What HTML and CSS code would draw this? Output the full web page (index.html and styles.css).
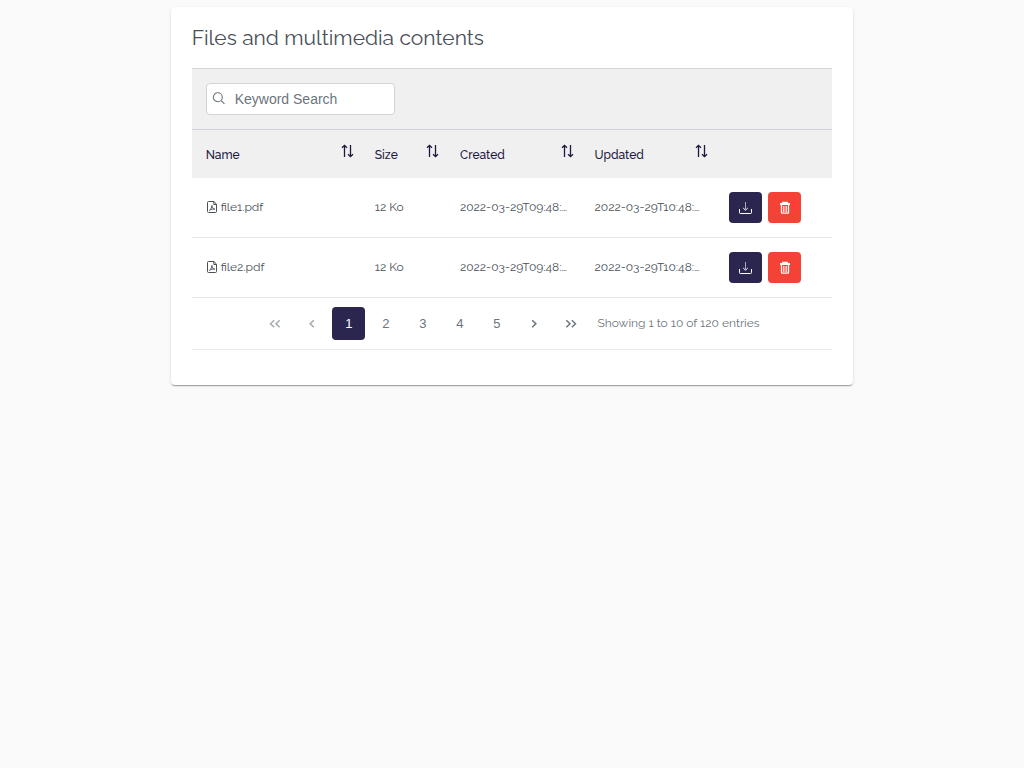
FILE: index.html
```html
<!DOCTYPE html>
<html lang="en">
<head>
<meta charset="utf-8">
<meta name="viewport" content="width=device-width, initial-scale=1">
<title>Files and multimedia contents</title>
<link rel="stylesheet" href="styles.css">
</head>
<body>
<svg class="sprite" aria-hidden="true">
  <symbol id="sort" viewBox="0 0 14 14"><path d="M4.500 13V1.500M2 3.800l2.500-2.400L7 3.800M10.500 1v11.500M8 10.200l2.500 2.400 2.500-2.400" fill="none" stroke="currentColor" stroke-width="1.300"/></symbol>
  <symbol id="pdf" viewBox="0 0 12 14"><path d="M2.500 1.500H8l2.500 2.800v7.200a1 1 0 0 1-1 1h-7a1 1 0 0 1-1-1v-9a1 1 0 0 1 1-1zM7.800 1.500v3h2.700" fill="none" stroke="currentColor"/><path d="M3.300 10.500C4.800 9.500 5.900 7.500 5.900 5.300M5.900 5.500c0 2 1.200 3.800 3 3.600M3.500 10.300c1.500-1.100 3.400-1.500 5.400-1.200" fill="none" stroke="currentColor" stroke-width=".9"/></symbol>
  <symbol id="download" viewBox="0 0 14 14"><path d="M6.500 1v7.500" fill="none" stroke="currentColor" stroke-opacity=".6"/><path d="M4.200 7l2.300 2.200L8.800 7" fill="none" stroke="currentColor"/><path d="M.5 8v3.700a.8.800 0 0 0 .8.800h10.400a.8.800 0 0 0 .8-.8V8" fill="none" stroke="currentColor"/></symbol>
  <symbol id="trash" viewBox="0 0 12 14"><path d="M1 3h10M4 2.500V1.700h4v.8" fill="none" stroke="currentColor" stroke-width="1.800"/><path d="M2.500 4v7.500a.6.600 0 0 0 .6.600h5.800a.6.600 0 0 0 .6-.6V4" fill="none" stroke="currentColor" stroke-width="1.300"/><path d="M4.500 5v6M6 5v6M7.500 5v6" fill="none" stroke="currentColor" stroke-width=".8"/></symbol>
  <symbol id="chevron" viewBox="0 0 14 14"><path d="M8.800 3.200L5.200 6.700l3.600 3.500" fill="none" stroke="currentColor" stroke-width="1.600"/></symbol>
  <symbol id="double" viewBox="0 0 14 14"><path d="M6.200 3.200L2.500 6.700l3.700 3.500M11.700 3.200L8 6.700l3.700 3.500" fill="none" stroke="currentColor" stroke-width="1.500"/></symbol>
</svg>
<main class="card">
  <h1 class="title">Files and multimedia contents</h1>
  <div class="toolbar">
    <label class="search">
      <svg class="search-icon" viewBox="0 0 14 14" aria-hidden="true"><path d="M10.300 5.300a4.500 4.500 0 1 1-9 0 4.500 4.500 0 0 1 9 0zM9 8.500l3.500 3.300" fill="none" stroke="currentColor" stroke-width="1.100"/></svg>
      <input class="search-input" type="text" placeholder="Keyword Search" aria-label="Keyword Search">
    </label>
  </div>
  <table class="files">
    <colgroup><col class="col-name"><col class="col-size"><col class="col-date"><col class="col-date"><col class="col-actions"></colgroup>
    <thead>
      <tr>
        <th><div class="head">Name <svg class="sort"><use href="#sort"/></svg></div></th>
        <th><div class="head">Size <svg class="sort"><use href="#sort"/></svg></div></th>
        <th><div class="head">Created <svg class="sort"><use href="#sort"/></svg></div></th>
        <th><div class="head">Updated <svg class="sort"><use href="#sort"/></svg></div></th>
        <th></th>
      </tr>
    </thead>
    <tbody>
      <tr>
        <td class="text"><div class="file"><svg class="pdf"><use href="#pdf"/></svg>file1.pdf</div></td>
        <td class="text">12 Ko</td>
        <td class="text">2022-03-29T09:48:…</td>
        <td class="text">2022-03-29T10:48:…</td>
        <td><div class="actions">
          <button class="action" type="button" aria-label="Download file1.pdf"><svg class="icon"><use href="#download"/></svg></button>
          <button class="action danger" type="button" aria-label="Delete file1.pdf"><svg class="icon"><use href="#trash"/></svg></button>
        </div></td>
      </tr>
      <tr>
        <td class="text"><div class="file"><svg class="pdf"><use href="#pdf"/></svg>file2.pdf</div></td>
        <td class="text">12 Ko</td>
        <td class="text">2022-03-29T09:48:…</td>
        <td class="text">2022-03-29T10:48:…</td>
        <td><div class="actions">
          <button class="action" type="button" aria-label="Download file2.pdf"><svg class="icon"><use href="#download"/></svg></button>
          <button class="action danger" type="button" aria-label="Delete file2.pdf"><svg class="icon"><use href="#trash"/></svg></button>
        </div></td>
      </tr>
    </tbody>
  </table>
  <nav class="paginator" aria-label="Pagination">
    <button class="page" type="button" disabled aria-label="First page"><svg class="icon"><use href="#double"/></svg></button>
    <button class="page" type="button" disabled aria-label="Previous page"><svg class="icon"><use href="#chevron"/></svg></button>
    <button class="page current" type="button" aria-current="page">1</button>
    <button class="page" type="button">2</button>
    <button class="page" type="button">3</button>
    <button class="page" type="button">4</button>
    <button class="page" type="button">5</button>
    <button class="page" type="button" aria-label="Next page"><svg class="icon flip"><use href="#chevron"/></svg></button>
    <button class="page" type="button" aria-label="Last page"><svg class="icon flip"><use href="#double"/></svg></button>
    <span class="summary">Showing 1 to 10 of 120 entries</span>
  </nav>
</main>
</body>
</html>
```
FILE: styles.css
```css
* { box-sizing: border-box; }
body {
  margin: 0;
  padding: 7px 0;
  background: #fafafa;
  color: #495057;
  font-family: Raleway, Lato, sans-serif;
  font-size: 12px;
  line-height: 18px;
}
.sprite { display: none; }
.card {
  width: 66.6667%;
  margin: 0 auto;
  padding: 18px 21px 35px;
  background: #fff;
  border-radius: 4px;
  box-shadow: 0 2px 1px -1px rgba(0,0,0,.2), 0 1px 1px 0 rgba(0,0,0,.14), 0 1px 3px 0 rgba(0,0,0,.12);
}
.title { margin: 0 0 17px; font-size: 21px; font-weight: 400; line-height: 26px; }
.toolbar {
  padding: 14px;
  background: #f0f0f0;
  border-top: 1px solid #ced4da;
  border-bottom: 1px solid #ced4da;
}
.search { display: flex; width: 189px; position: relative; }
.search-icon { position: absolute; left: 6px; top: 9px; width: 14px; height: 14px; color: #6c757d; }
.search-input {
  width: 100%;
  height: 32px;
  padding: 0 7px 0 28px;
  border: 1px solid #ced4da;
  border-radius: 4px;
  background: #fff;
  color: #495057;
  font-family: "Liberation Sans", Arial, sans-serif;
  font-size: 14px;
}
.search-input::placeholder { color: #6c757d; }
.files { width: 100%; table-layout: fixed; border-collapse: separate; border-spacing: 0; }
.col-name { width: 26.4%; }
.col-size { width: 13.3%; }
.col-date { width: 21%; }
.files th { height: 48px; padding: 0 7px 0 14px; background: #f0f0f0; color: #1c1840; font-weight: 500; text-align: left; }
.head { display: flex; justify-content: space-between; align-items: flex-end; }
.sort { width: 14px; height: 14px; margin-bottom: 6px; }
.files td {
  height: 60px;
  padding: 0 0 0 14px;
  border-bottom: 1px solid #e4e7ea;
  white-space: nowrap;
}
.files .text { padding-bottom: 2px; overflow: hidden; text-overflow: ellipsis; }
.file { display: flex; align-items: center; gap: 3px; }
.pdf { width: 12px; height: 14px; }
.actions { display: flex; gap: 6px; }
.action {
  display: grid;
  place-items: center;
  width: 33px;
  height: 31px;
  padding: 0;
  border: 0;
  border-radius: 4px;
  background: #2a264f;
  color: #fff;
}
.danger { background: #f44336; }
.icon { width: 14px; height: 14px; }
.flip { transform: scaleX(-1); }
.paginator {
  display: flex;
  align-items: center;
  justify-content: center;
  gap: 4px;
  height: 52px;
  border-bottom: 1px solid #e9e9e9;
  color: #6c757d;
}
.page {
  display: grid;
  place-items: center;
  width: 33px;
  height: 33px;
  padding: 0;
  border: 0;
  border-radius: 4px;
  background: transparent;
  color: #6c757d;
  font-family: "Liberation Sans", Arial, sans-serif;
  font-size: 13px;
}
.page:disabled { opacity: .6; }
.current { background: #2a264f; color: #fff; }
.summary { padding: 0 6px 2px; }
```
